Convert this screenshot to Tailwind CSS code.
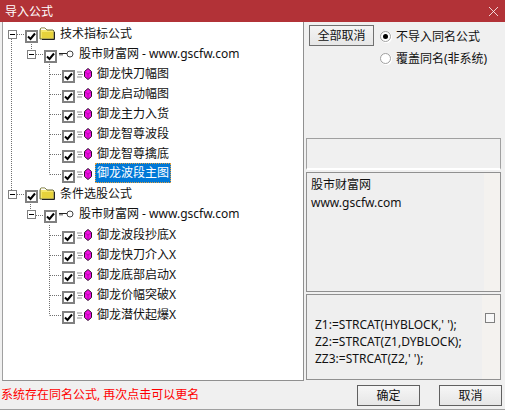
<!DOCTYPE html>
<html lang="zh-CN">
<head>
<meta charset="UTF-8">
<title>导入公式</title>
<script src="https://cdn.jsdelivr.net/npm/@tailwindcss/browser@4"></script>
</head>
<body class="overflow-hidden bg-[#f0f0f0]">
<svg class="hidden">
  <symbol id="check" viewBox="0 0 9 9"><path d="M1 4.5 L3.5 7 L8 1.5" fill="none" stroke="#000" stroke-width="2"/></symbol>
  <symbol id="folder" viewBox="0 0 16 13"><path d="M1 12V3l1-2h4l2 2h6l1 1v8z" fill="#f5e66a" stroke="#6b6b3a"/><path d="M2 1.5h4l1.500 1.500H2z" fill="#fff"/><path d="M3 5h11v6H3z" fill="#e6d23c"/><path d="M15.500 5v7.500H3" fill="none" stroke="#222"/></symbol>
  <symbol id="key" viewBox="0 0 15 9"><path d="M0 3.500h8M1 3.500v2M3 3.500v2" fill="none" stroke="#222"/><circle cx="11" cy="4" r="3" fill="#fff" stroke="#444"/></symbol>
  <symbol id="gem" viewBox="0 0 15 12"><path d="M0 4h5M1 6.500h5M0 9h5" stroke="#909090"/><path d="M11 .5l3.500 3v5L11 11.500l-3.500-3v-5z" fill="#f010e0" stroke="#301030"/><path d="M8 4l3 2 3-2M11 6v5" fill="none" stroke="#a000a0" stroke-width=".7"/></symbol>
</svg>

<div class="flex h-[410px] w-[505px] flex-col border-b border-[#a0a0a0] font-['Noto_Sans','Noto_Sans_CJK_SC',sans-serif] text-[12px] leading-[17px] text-[#111]">
  <!-- title -->
  <div class="flex h-[22px] shrink-0 items-center justify-between bg-[#b23237] pl-[5px] pr-[7px] text-white">
    <span>导入公式</span>
    <svg class="size-[9px]" viewBox="0 0 9 9"><path d="M0 0l9 9M9 0L0 9" stroke="#fff" stroke-width=".8"/></svg>
  </div>

  <div class="flex h-[359px] shrink-0">
    <!-- tree -->
    <div class="relative ml-[2px] h-[359px] w-[302px] shrink-0 border-x border-b border-l-[#a0a0a0] border-r-[#909090] border-b-[#909090] bg-white pt-[8px]">
      <svg class="absolute left-[-3px] top-[-22px]" width="305" height="380">
        <path d="M11.500 39V190M17 34.500h7M31.500 44v6M36 54.500h7M49.500 64V174.500M50 74.500h12M50 94.500h12M50 114.500h12M50 134.500h12M50 154.500h12M50 174.500h12M17 194.500h7M30.500 204v7M36 215.500h7M49.500 225V315.500M50 235.500h12M50 255.500h12M50 275.500h12M50 295.500h12M50 315.500h12" stroke="#707070" stroke-dasharray="1 1" fill="none"/>
      </svg>

      <div class="relative flex h-5 items-start pl-[5px]">
        <div class="mr-[8px] flex size-[9px] mt-[0px] items-center justify-center border border-[#808080] bg-white"><div class="h-px w-[5px] bg-black"></div></div>
        <div class="flex size-[13px] items-center justify-center border-2 border-[#808080] bg-white"><svg class="size-[9px]"><use href="#check"/></svg></div>
        <svg class="ml-[1px] mt-[-3px] h-[13px] w-[16px]"><use href="#folder"/></svg>
        <span class="ml-[5px] mt-[-5px] leading-[17px]">技术指标公式</span>
      </div>
      <div class="relative flex h-5 items-start pl-[24px]">
        <div class="mr-[8px] flex size-[9px] items-center justify-center border border-[#808080] bg-white"><div class="h-px w-[5px] bg-black"></div></div>
        <div class="flex size-[13px] items-center justify-center border-2 border-[#808080] bg-white"><svg class="size-[9px]"><use href="#check"/></svg></div>
        <svg class="ml-[2px] h-[9px] w-[15px]"><use href="#key"/></svg>
        <span class="ml-[5px] mt-[-5px]">股市财富网 - www.gscfw.com</span>
      </div>
      <div class="relative flex h-5 items-start pl-[59px]">
        <div class="flex size-[13px] items-center justify-center border-2 border-[#808080] bg-white"><svg class="size-[9px]"><use href="#check"/></svg></div>
        <svg class="ml-[2px] mt-[-2px] h-[12px] w-[15px]"><use href="#gem"/></svg>
        <span class="ml-[5px] mt-[-5px]">御龙快刀幅图</span>
      </div>
      <div class="relative flex h-5 items-start pl-[59px]">
        <div class="flex size-[13px] items-center justify-center border-2 border-[#808080] bg-white"><svg class="size-[9px]"><use href="#check"/></svg></div>
        <svg class="ml-[2px] mt-[-2px] h-[12px] w-[15px]"><use href="#gem"/></svg>
        <span class="ml-[5px] mt-[-5px]">御龙启动幅图</span>
      </div>
      <div class="relative flex h-5 items-start pl-[59px]">
        <div class="flex size-[13px] items-center justify-center border-2 border-[#808080] bg-white"><svg class="size-[9px]"><use href="#check"/></svg></div>
        <svg class="ml-[2px] mt-[-2px] h-[12px] w-[15px]"><use href="#gem"/></svg>
        <span class="ml-[5px] mt-[-5px]">御龙主力入货</span>
      </div>
      <div class="relative flex h-5 items-start pl-[59px]">
        <div class="flex size-[13px] items-center justify-center border-2 border-[#808080] bg-white"><svg class="size-[9px]"><use href="#check"/></svg></div>
        <svg class="ml-[2px] mt-[-2px] h-[12px] w-[15px]"><use href="#gem"/></svg>
        <span class="ml-[5px] mt-[-5px]">御龙智尊波段</span>
      </div>
      <div class="relative flex h-5 items-start pl-[59px]">
        <div class="flex size-[13px] items-center justify-center border-2 border-[#808080] bg-white"><svg class="size-[9px]"><use href="#check"/></svg></div>
        <svg class="ml-[2px] mt-[-2px] h-[12px] w-[15px]"><use href="#gem"/></svg>
        <span class="ml-[5px] mt-[-5px]">御龙智尊擒底</span>
      </div>
      <div class="relative flex h-5 items-start pl-[59px]">
        <div class="flex size-[13px] items-center justify-center border-2 border-[#808080] bg-white"><svg class="size-[9px]"><use href="#check"/></svg></div>
        <svg class="ml-[2px] mt-[-2px] h-[12px] w-[15px]"><use href="#gem"/></svg>
        <span class="ml-[3px] mt-[-7px] h-[20px] border border-dotted border-[#e0a040] bg-[#0078d7] px-[1px] text-white">御龙波段主图</span>
      </div>

      <div class="relative flex h-5 items-start pl-[5px]">
        <div class="mr-[8px] flex size-[9px] items-center justify-center border border-[#808080] bg-white"><div class="h-px w-[5px] bg-black"></div></div>
        <div class="flex size-[13px] items-center justify-center border-2 border-[#808080] bg-white"><svg class="size-[9px]"><use href="#check"/></svg></div>
        <svg class="ml-[1px] mt-[-3px] h-[13px] w-[16px]"><use href="#folder"/></svg>
        <span class="ml-[5px] mt-[-5px]">条件选股公式</span>
      </div>
      <div class="relative flex h-[21px] items-start pl-[24px]">
        <div class="mr-[8px] flex size-[9px] items-center justify-center border border-[#808080] bg-white"><div class="h-px w-[5px] bg-black"></div></div>
        <div class="flex size-[13px] items-center justify-center border-2 border-[#808080] bg-white"><svg class="size-[9px]"><use href="#check"/></svg></div>
        <svg class="ml-[2px] h-[9px] w-[15px]"><use href="#key"/></svg>
        <span class="ml-[5px] mt-[-5px]">股市财富网 - www.gscfw.com</span>
      </div>
      <div class="relative flex h-5 items-start pl-[59px]">
        <div class="flex size-[13px] items-center justify-center border-2 border-[#808080] bg-white"><svg class="size-[9px]"><use href="#check"/></svg></div>
        <svg class="ml-[2px] mt-[-2px] h-[12px] w-[15px]"><use href="#gem"/></svg>
        <span class="ml-[5px] mt-[-5px]">御龙波段抄底X</span>
      </div>
      <div class="relative flex h-5 items-start pl-[59px]">
        <div class="flex size-[13px] items-center justify-center border-2 border-[#808080] bg-white"><svg class="size-[9px]"><use href="#check"/></svg></div>
        <svg class="ml-[2px] mt-[-2px] h-[12px] w-[15px]"><use href="#gem"/></svg>
        <span class="ml-[5px] mt-[-5px]">御龙快刀介入X</span>
      </div>
      <div class="relative flex h-5 items-start pl-[59px]">
        <div class="flex size-[13px] items-center justify-center border-2 border-[#808080] bg-white"><svg class="size-[9px]"><use href="#check"/></svg></div>
        <svg class="ml-[2px] mt-[-2px] h-[12px] w-[15px]"><use href="#gem"/></svg>
        <span class="ml-[5px] mt-[-5px]">御龙底部启动X</span>
      </div>
      <div class="relative flex h-5 items-start pl-[59px]">
        <div class="flex size-[13px] items-center justify-center border-2 border-[#808080] bg-white"><svg class="size-[9px]"><use href="#check"/></svg></div>
        <svg class="ml-[2px] mt-[-2px] h-[12px] w-[15px]"><use href="#gem"/></svg>
        <span class="ml-[5px] mt-[-5px]">御龙价幅突破X</span>
      </div>
      <div class="relative flex h-5 items-start pl-[59px]">
        <div class="flex size-[13px] items-center justify-center border-2 border-[#808080] bg-white"><svg class="size-[9px]"><use href="#check"/></svg></div>
        <svg class="ml-[2px] mt-[-2px] h-[12px] w-[15px]"><use href="#gem"/></svg>
        <span class="ml-[5px] mt-[-5px]">御龙潜伏起爆X</span>
      </div>
    </div>

    <!-- right side -->
    <div class="flex w-[201px] flex-col pl-[2px]">
      <div class="flex h-[116px] shrink-0 items-start pl-[3px] pt-[3px]">
        <button class="h-[21px] w-[65px] border border-[#707070] bg-gradient-to-b from-[#f4f4f4] to-[#e6e6e6] text-center leading-[18px]">全部取消</button>
        <div class="ml-[6px] flex flex-col gap-[5px] pt-[3px]">
          <div class="flex h-[17px] items-center gap-[5px]">
            <span class="flex size-[11px] items-center justify-center rounded-full border border-[#a0a0a0] bg-white shadow-[1px_1px_0_#fff]"><span class="size-[5px] rounded-full bg-black"></span></span>
            <span>不导入同名公式</span>
          </div>
          <div class="flex h-[17px] items-center gap-[5px]">
            <span class="size-[11px] rounded-full border border-[#a0a0a0] bg-white shadow-[1px_1px_0_#fff]"></span>
            <span>覆盖同名(非系统)</span>
          </div>
        </div>
      </div>
      <div class="h-[32px] w-[195px] shrink-0 border-x border-t border-[#a0a0a0] border-b-2 border-b-white"></div>
      <div class="mt-[2px] flex h-[120px] w-[195px] shrink-0 border border-[#909090] bg-[#f4f2ef]">
        <div class="h-full w-[177px] bg-[#efefef] pl-[4px] pt-[3px] leading-[18px]">
          <p>股市财富网</p>
          <p>www.gscfw.com</p>
        </div>
      </div>
      <div class="mt-[2px] flex h-[86px] w-[195px] shrink-0 border border-[#909090] bg-[#f4f2ef]">
        <div class="flex h-full w-[175px] flex-col justify-center bg-[#efefef] pl-[8px] pt-[8px] leading-[17px]">
          <p>Z1:=STRCAT(HYBLOCK,' ');</p>
          <p>Z2:=STRCAT(Z1,DYBLOCK);</p>
          <p>ZZ3:=STRCAT(Z2,' ');</p>
        </div>
        <span class="ml-[3px] mt-[18px] size-[10px] border border-[#808080] bg-[#f8f8f8]"></span>
      </div>
    </div>
  </div>

  <!-- footer -->
  <div class="flex flex-1 items-start justify-between pl-[1px] pr-[3px]">
    <span class="mt-[5px] text-[#ff0000]">系统存在同名公式, 再次点击可以更名</span>
    <div class="mt-[4px] flex gap-[19px]">
      <button class="h-[21px] w-[63px] border border-[#606060] bg-gradient-to-b from-[#f6f6f6] to-[#e6e6e6] text-center leading-[18px]">确定</button>
      <button class="h-[21px] w-[63px] border border-[#606060] bg-gradient-to-b from-[#f6f6f6] to-[#e6e6e6] text-center leading-[18px]">取消</button>
    </div>
  </div>
</div>
</body>
</html>
